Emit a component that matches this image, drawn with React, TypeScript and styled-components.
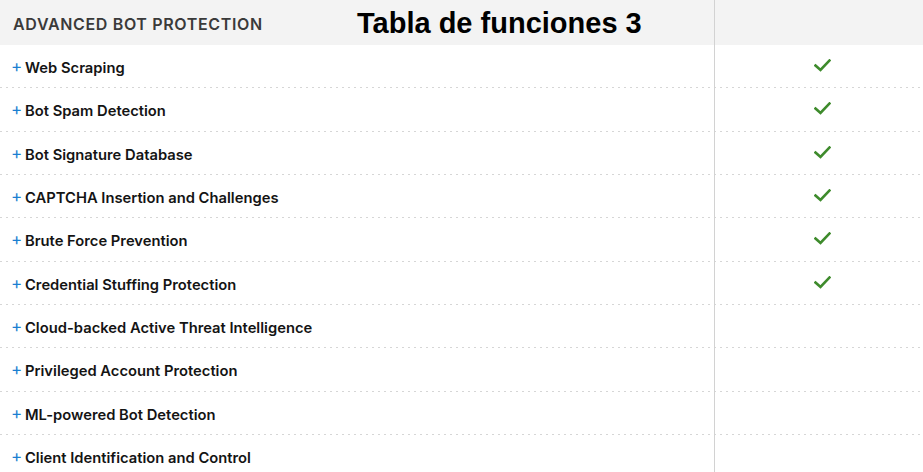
import React from "react";
import styled, { createGlobalStyle } from "styled-components";

const Global = createGlobalStyle`
  html, body { margin: 0; padding: 0; background: #ffffff; overflow: hidden; }
  body { font-family: Inter, "Open Sans", Arial, sans-serif; }
`;

const Table = styled.div`
  position: relative;
  width: 923px;
  display: flex;
  flex-direction: column;
`;

const HeaderRow = styled.div`
  display: grid;
  grid-template-columns: 714px 1fr;
  height: 45px;
  background: #f3f3f3;
`;

const HeaderLabel = styled.div`
  display: flex;
  align-items: center;
  padding: 3px 0 0 13px;
  font-size: 16px;
  font-weight: 600;
  color: #3a3a3a;
  letter-spacing: 0.65px;
`;

const ValueCell = styled.div`
  border-left: 1px solid #d2d2d2;
  display: flex;
  align-items: flex-start;
  padding: 14px 0 0 99px;
`;

const Title = styled.div`
  position: absolute;
  left: 357px;
  top: 7px;
  font-family: "Liberation Sans", Arial, sans-serif;
  font-weight: 700;
  font-size: 29px;
  color: #000;
  white-space: nowrap;
`;

const Row = styled.div`
  display: grid;
  grid-template-columns: 714px 1fr;
  height: 43.33px;
  box-sizing: border-box;
  background-image: repeating-linear-gradient(
    to right,
    #d6d6d6 0 2px,
    transparent 2px 6px
  );
  background-size: 100% 1px;
  background-position: 0 100%;
  background-repeat: no-repeat;
`;

const FeatureCell = styled.div`
  display: flex;
  align-items: center;
  padding-left: 11px;
  padding-top: 3px;
  font-size: 14.75px;
  font-weight: 600;
  color: #141414;
`;

const Plus = styled.span`
  display: inline-block;
  width: 14px;
  margin-top: -3px;
  color: #1b7fd1;
  font-weight: 400;
  font-size: 17px;
  line-height: 1;
`;

const Check = () => (
  <svg width="17" height="13" viewBox="0 0 17 13" fill="none">
    <polyline
      points="1.5,6.5 6.5,11 15.5,1.5"
      stroke="#3e8b2c"
      strokeWidth="2.6"
      strokeLinecap="square"
    />
  </svg>
);

const features: { name: string; check: boolean }[] = [
  { name: "Web Scraping", check: true },
  { name: "Bot Spam Detection", check: true },
  { name: "Bot Signature Database", check: true },
  { name: "CAPTCHA Insertion and Challenges", check: true },
  { name: "Brute Force Prevention", check: true },
  { name: "Credential Stuffing Protection", check: true },
  { name: "Cloud-backed Active Threat Intelligence", check: false },
  { name: "Privileged Account Protection", check: false },
  { name: "ML-powered Bot Detection", check: false },
  { name: "Client Identification and Control", check: false },
];

export default function App() {
  return (
    <>
      <Global />
      <Table>
        <HeaderRow>
          <HeaderLabel>ADVANCED BOT PROTECTION</HeaderLabel>
          <ValueCell />
        </HeaderRow>
        {features.map((f) => (
          <Row key={f.name}>
            <FeatureCell>
              <Plus>+</Plus>
              {f.name}
            </FeatureCell>
            <ValueCell>{f.check && <Check />}</ValueCell>
          </Row>
        ))}
        <Title>Tabla de funciones 3</Title>
      </Table>
    </>
  );
}
